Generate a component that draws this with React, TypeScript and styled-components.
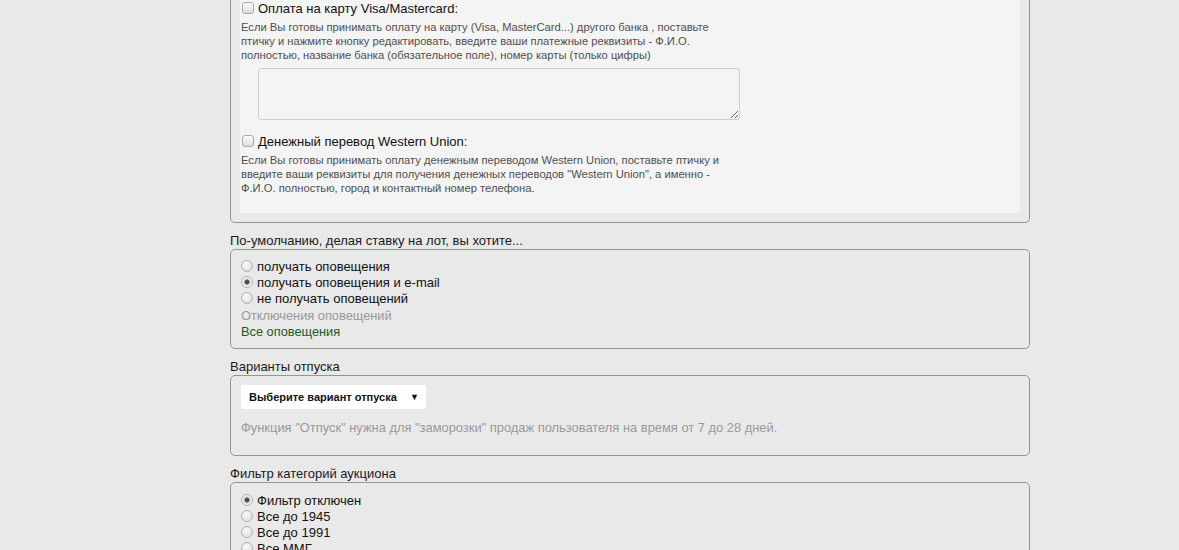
import styled, { createGlobalStyle } from 'styled-components';

const GlobalStyle = createGlobalStyle`
  body {
    margin: 0;
    background: #e9e9e9;
    font-family: Tahoma, "Liberation Sans", Arial, sans-serif;
    color: #1a1a1a;
  }
`;

const Page = styled.div`
  width: 800px;
  padding-left: 230px;
  padding-bottom: 40px;
`;

const Box = styled.div<{ $cut?: boolean }>`
  border: 1px solid #8d9b8d;
  border-top: ${(p) => (p.$cut ? 'none' : '1px solid #8d9b8d')};
  border-radius: ${(p) => (p.$cut ? '0 0 5px 5px' : '5px')};
  padding: ${(p) => (p.$cut ? '0 9px 9px' : '8px 10px 8px')};
`;

const Panel = styled.div`
  background: #f4f4f4;
  padding: 0 1px 18px;
`;

const CheckRow = styled.label`
  display: flex;
  align-items: center;
  gap: 4px;
  height: 16px;
  padding-left: 1px;
  font-size: 13px;
  color: #111;
`;

const Check = styled.span`
  width: 12px;
  height: 12px;
  border: 1px solid #a9a9a9;
  border-radius: 3px;
  background: linear-gradient(#fdfdfd, #dcdcdc);
  box-sizing: border-box;
  flex: none;
`;

const Hint = styled.p`
  margin: 4px 0 0;
  font-size: 11.2px;
  line-height: 14px;
  color: #4f4f4f;
  width: 490px;
`;

const TextArea = styled.textarea`
  display: block;
  margin: 6px 0 13px 17px;
  width: 482px;
  height: 52px;
  box-sizing: border-box;
  border: 1px solid #cfcfcf;
  border-radius: 3px;
  background: #f4f4f4;
  resize: vertical;
`;

const Title = styled.div`
  margin-top: 10px;
  font-size: 13px;
  line-height: 16px;
  color: #1a1a1a;
`;

const RadioRow = styled.label`
  display: flex;
  align-items: center;
  gap: 4px;
  height: 16px;
  font-size: 13px;
  color: #111;
`;

const Radio = styled.span<{ $on?: boolean }>`
  width: 12px;
  height: 12px;
  border-radius: 50%;
  box-sizing: border-box;
  border: 1px solid #b4b4b4;
  background: ${(p) =>
    p.$on
      ? 'radial-gradient(circle, #444 0, #555 2px, #ddd 3px, #f4f4f4 5px)'
      : 'radial-gradient(circle at 40% 35%, #fafafa, #d8d8d8)'};
  flex: none;
`;

const Notes = styled.div`
  margin-top: 2px;
`;

const Note = styled.div<{ $green?: boolean }>`
  font-size: 12.8px;
  line-height: 16px;
  color: ${(p) => (p.$green ? '#235a23' : '#9a9a9a')};
`;

const VacationBox = styled(Box)`
  padding: 9px 10px 20px;
`;

const Select = styled.div`
  width: 185px;
  height: 24px;
  box-sizing: border-box;
  background: #fff;
  border-radius: 2px;
  display: flex;
  align-items: center;
  justify-content: space-between;
  padding: 0 7px 0 8px;
  font-size: 11px;
  font-weight: bold;
  color: #111;
`;

const Arrow = styled.span`
  font-size: 9px;
  color: #111;
`;

const GrayText = styled.div`
  margin-top: 12px;
  font-size: 12.9px;
  line-height: 14px;
  color: #9a9a9a;
`;

const FilterBox = styled(Box)`
  padding-top: 9px;
`;

const notify = ['получать оповещения', 'получать оповещения и e-mail', 'не получать оповещений'];
const filters = ['Фильтр отключен', 'Все до 1945', 'Все до 1991', 'Все ММГ'];

export default function App() {
  return (
    <Page>
      <GlobalStyle />
      <Box $cut>
        <Panel>
          <CheckRow>
            <Check />
            Оплата на карту Visa/Mastercard:
          </CheckRow>
          <Hint>
            Если Вы готовы принимать оплату на карту (Visa, MasterCard...) другого банка , поставьте
            птичку и нажмите кнопку редактировать, введите ваши платежные реквизиты - Ф.И.О.
            полностью, название банка (обязательное поле), номер карты (только цифры)
          </Hint>
          <TextArea />
          <CheckRow>
            <Check />
            Денежный перевод Western Union:
          </CheckRow>
          <Hint>
            Если Вы готовы принимать оплату денежным переводом Western Union, поставьте птичку и
            введите ваши реквизиты для получения денежных переводов "Western Union", а именно -
            Ф.И.О. полностью, город и контактный номер телефона.
          </Hint>
        </Panel>
      </Box>

      <Title>По-умолчанию, делая ставку на лот, вы хотите...</Title>
      <Box>
        {notify.map((n, i) => (
          <RadioRow key={n}>
            <Radio $on={i === 1} />
            {n}
          </RadioRow>
        ))}
        <Notes>
          <Note>Отключения оповещений</Note>
          <Note $green>Все оповещения</Note>
        </Notes>
      </Box>

      <Title>Варианты отпуска</Title>
      <VacationBox>
        <Select>
          Выберите вариант отпуска
          <Arrow>▼</Arrow>
        </Select>
        <GrayText>Функция "Отпуск" нужна для "заморозки" продаж пользователя на время от 7 до 28 дней.</GrayText>
      </VacationBox>

      <Title>Фильтр категорий аукциона</Title>
      <FilterBox>
        {filters.map((f, i) => (
          <RadioRow key={f}>
            <Radio $on={i === 0} />
            {f}
          </RadioRow>
        ))}
      </FilterBox>
    </Page>
  );
}
